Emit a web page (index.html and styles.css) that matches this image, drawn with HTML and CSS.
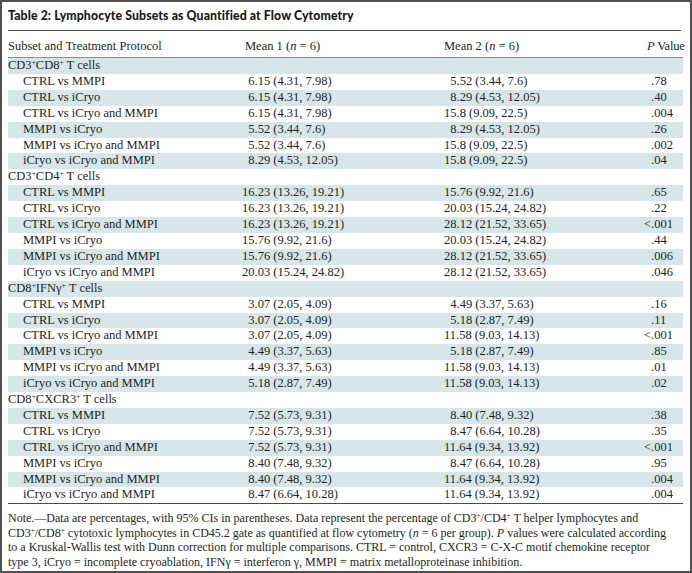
FILE: index.html
```html
<!DOCTYPE html>
<html lang="en">
<head>
<meta charset="utf-8">
<title>Table 2</title>
<link rel="stylesheet" href="styles.css">
</head>
<body>
<div class="frame">
  <h1 class="title">Table 2: Lymphocyte Subsets as Quantified at Flow Cytometry</h1>
  <table class="data">
    <colgroup>
      <col class="c-label">
      <col class="c-m1">
      <col class="c-m2">
      <col class="c-p">
    </colgroup>
    <thead>
      <tr>
        <th>Subset and Treatment Protocol</th>
        <th class="h-m1">Mean 1 (<i>n</i> = 6)</th>
        <th>Mean 2 (<i>n</i> = 6)</th>
        <th class="h-p"><i>P</i> Value</th>
      </tr>
    </thead>
    <tbody>
      <tr class="grp"><td colspan="4">CD3<sup>+</sup>CD8<sup>+</sup> T cells</td></tr>
      <tr><td class="sub">CTRL vs MMPI</td><td>&#8199;6.15 (4.31, 7.98)</td><td>&#8199;5.52 (3.44, 7.6)</td><td>.78</td></tr>
      <tr><td class="sub">CTRL vs iCryo</td><td>&#8199;6.15 (4.31, 7.98)</td><td>&#8199;8.29 (4.53, 12.05)</td><td>.40</td></tr>
      <tr><td class="sub">CTRL vs iCryo and MMPI</td><td>&#8199;6.15 (4.31, 7.98)</td><td>15.8 (9.09, 22.5)</td><td>.004</td></tr>
      <tr><td class="sub">MMPI vs iCryo</td><td>&#8199;5.52 (3.44, 7.6)</td><td>&#8199;8.29 (4.53, 12.05)</td><td>.26</td></tr>
      <tr><td class="sub">MMPI vs iCryo and MMPI</td><td>&#8199;5.52 (3.44, 7.6)</td><td>15.8 (9.09, 22.5)</td><td>.002</td></tr>
      <tr><td class="sub">iCryo vs iCryo and MMPI</td><td>&#8199;8.29 (4.53, 12.05)</td><td>15.8 (9.09, 22.5)</td><td>.04</td></tr>
      <tr class="grp"><td colspan="4">CD3<sup>+</sup>CD4<sup>+</sup> T cells</td></tr>
      <tr><td class="sub">CTRL vs MMPI</td><td>16.23 (13.26, 19.21)</td><td>15.76 (9.92, 21.6)</td><td>.65</td></tr>
      <tr><td class="sub">CTRL vs iCryo</td><td>16.23 (13.26, 19.21)</td><td>20.03 (15.24, 24.82)</td><td>.22</td></tr>
      <tr><td class="sub">CTRL vs iCryo and MMPI</td><td>16.23 (13.26, 19.21)</td><td>28.12 (21.52, 33.65)</td><td><span class="lt">&lt;</span>.001</td></tr>
      <tr><td class="sub">MMPI vs iCryo</td><td>15.76 (9.92, 21.6)</td><td>20.03 (15.24, 24.82)</td><td>.44</td></tr>
      <tr><td class="sub">MMPI vs iCryo and MMPI</td><td>15.76 (9.92, 21.6)</td><td>28.12 (21.52, 33.65)</td><td>.006</td></tr>
      <tr><td class="sub">iCryo vs iCryo and MMPI</td><td>20.03 (15.24, 24.82)</td><td>28.12 (21.52, 33.65)</td><td>.046</td></tr>
      <tr class="grp"><td colspan="4">CD8<sup>+</sup>IFN&#947;<sup>+</sup> T cells</td></tr>
      <tr><td class="sub">CTRL vs MMPI</td><td>&#8199;3.07 (2.05, 4.09)</td><td>&#8199;4.49 (3.37, 5.63)</td><td>.16</td></tr>
      <tr><td class="sub">CTRL vs iCryo</td><td>&#8199;3.07 (2.05, 4.09)</td><td>&#8199;5.18 (2.87, 7.49)</td><td>.11</td></tr>
      <tr><td class="sub">CTRL vs iCryo and MMPI</td><td>&#8199;3.07 (2.05, 4.09)</td><td>11.58 (9.03, 14.13)</td><td><span class="lt">&lt;</span>.001</td></tr>
      <tr><td class="sub">MMPI vs iCryo</td><td>&#8199;4.49 (3.37, 5.63)</td><td>&#8199;5.18 (2.87, 7.49)</td><td>.85</td></tr>
      <tr><td class="sub">MMPI vs iCryo and MMPI</td><td>&#8199;4.49 (3.37, 5.63)</td><td>11.58 (9.03, 14.13)</td><td>.01</td></tr>
      <tr><td class="sub">iCryo vs iCryo and MMPI</td><td>&#8199;5.18 (2.87, 7.49)</td><td>11.58 (9.03, 14.13)</td><td>.02</td></tr>
      <tr class="grp"><td colspan="4">CD8<sup>+</sup>CXCR3<sup>+</sup> T cells</td></tr>
      <tr><td class="sub">CTRL vs MMPI</td><td>&#8199;7.52 (5.73, 9.31)</td><td>&#8199;8.40 (7.48, 9.32)</td><td>.38</td></tr>
      <tr><td class="sub">CTRL vs iCryo</td><td>&#8199;7.52 (5.73, 9.31)</td><td>&#8199;8.47 (6.64, 10.28)</td><td>.35</td></tr>
      <tr><td class="sub">CTRL vs iCryo and MMPI</td><td>&#8199;7.52 (5.73, 9.31)</td><td>11.64 (9.34, 13.92)</td><td><span class="lt">&lt;</span>.001</td></tr>
      <tr><td class="sub">MMPI vs iCryo</td><td>&#8199;8.40 (7.48, 9.32)</td><td>&#8199;8.47 (6.64, 10.28)</td><td>.95</td></tr>
      <tr><td class="sub">MMPI vs iCryo and MMPI</td><td>&#8199;8.40 (7.48, 9.32)</td><td>11.64 (9.34, 13.92)</td><td>.004</td></tr>
      <tr><td class="sub">iCryo vs iCryo and MMPI</td><td>&#8199;8.47 (6.64, 10.28)</td><td>11.64 (9.34, 13.92)</td><td>.004</td></tr>
    </tbody>
  </table>
  <p class="note">Note.&mdash;Data are percentages, with 95% CIs in parentheses. Data represent the percentage of CD3<sup>+</sup>/CD4<sup>+</sup> T helper lymphocytes and<br>CD3<sup>+</sup>/CD8<sup>+</sup> cytotoxic lymphocytes in CD45.2 gate as quantified at flow cytometry (<i>n</i> = 6 per group). <i>P</i> values were calculated according<br>to a Kruskal-Wallis test with Dunn correction for multiple comparisons. CTRL = control, CXCR3 = C-X-C motif chemokine receptor<br>type 3, iCryo = incomplete cryoablation, IFN&#947; = interferon &#947;, MMPI = matrix metalloproteinase inhibition.</p>
</div>
</body>
</html>
```

FILE: styles.css
```css
html, body {
  margin: 0;
  padding: 0;
  background: #ffffff;
}

.frame {
  box-sizing: border-box;
  width: 692px;
  height: 573px;
  border: 2px solid #505050;
  padding: 0 9px 0 6px;
  color: #231f20;
  font-family: "Liberation Serif", "Times New Roman", serif;
  font-size: 12.5px;
  background: #ffffff;
}

.title {
  margin: 0;
  padding: 7px 0 0 0;
  height: 21px;
  font-family: Lato, "DejaVu Sans", sans-serif;
  font-weight: 900;
  font-size: 12.3px;
  letter-spacing: 0.1px;
  line-height: 14px;
  color: #1a1a1a;
  border-bottom: 1px solid #4a4a4a;
}

.data {
  width: 675px;
  border-collapse: collapse;
  table-layout: fixed;
}

.c-label { width: 234px; }
.c-m1 { width: 202px; }
.c-m2 { width: 207px; }
.c-p { width: 32px; }

.data th {
  font-weight: normal;
  text-align: left;
  white-space: nowrap;
  height: 22px;
  padding: 0 0 4px 0;
  vertical-align: bottom;
  line-height: 14px;
}

.data thead tr {
  border-bottom: 1px solid #8a8a8a;
}

.data .h-m1 { padding-left: 3px; }
.data .h-p {
  text-indent: -4px;
  letter-spacing: -0.2px;
}

.data td {
  padding: 0;
  height: 15.9px;
  line-height: 15.9px;
  white-space: nowrap;
  vertical-align: middle;
}

.data tbody tr:nth-child(odd) {
  background: #d7e7e9;
}

.data tbody tr:last-child {
  border-bottom: 1px solid #4a4a4a;
}

.data td.sub {
  padding-left: 15px;
}

.data sup, .note sup {
  font-size: 0.6em;
  line-height: 0;
  vertical-align: 0.55em;
}

.lt {
  margin-left: -7px;
}

.note {
  margin: 0;
  padding-top: 7px;
  font-size: 12px;
  line-height: 14.5px;
}
```
